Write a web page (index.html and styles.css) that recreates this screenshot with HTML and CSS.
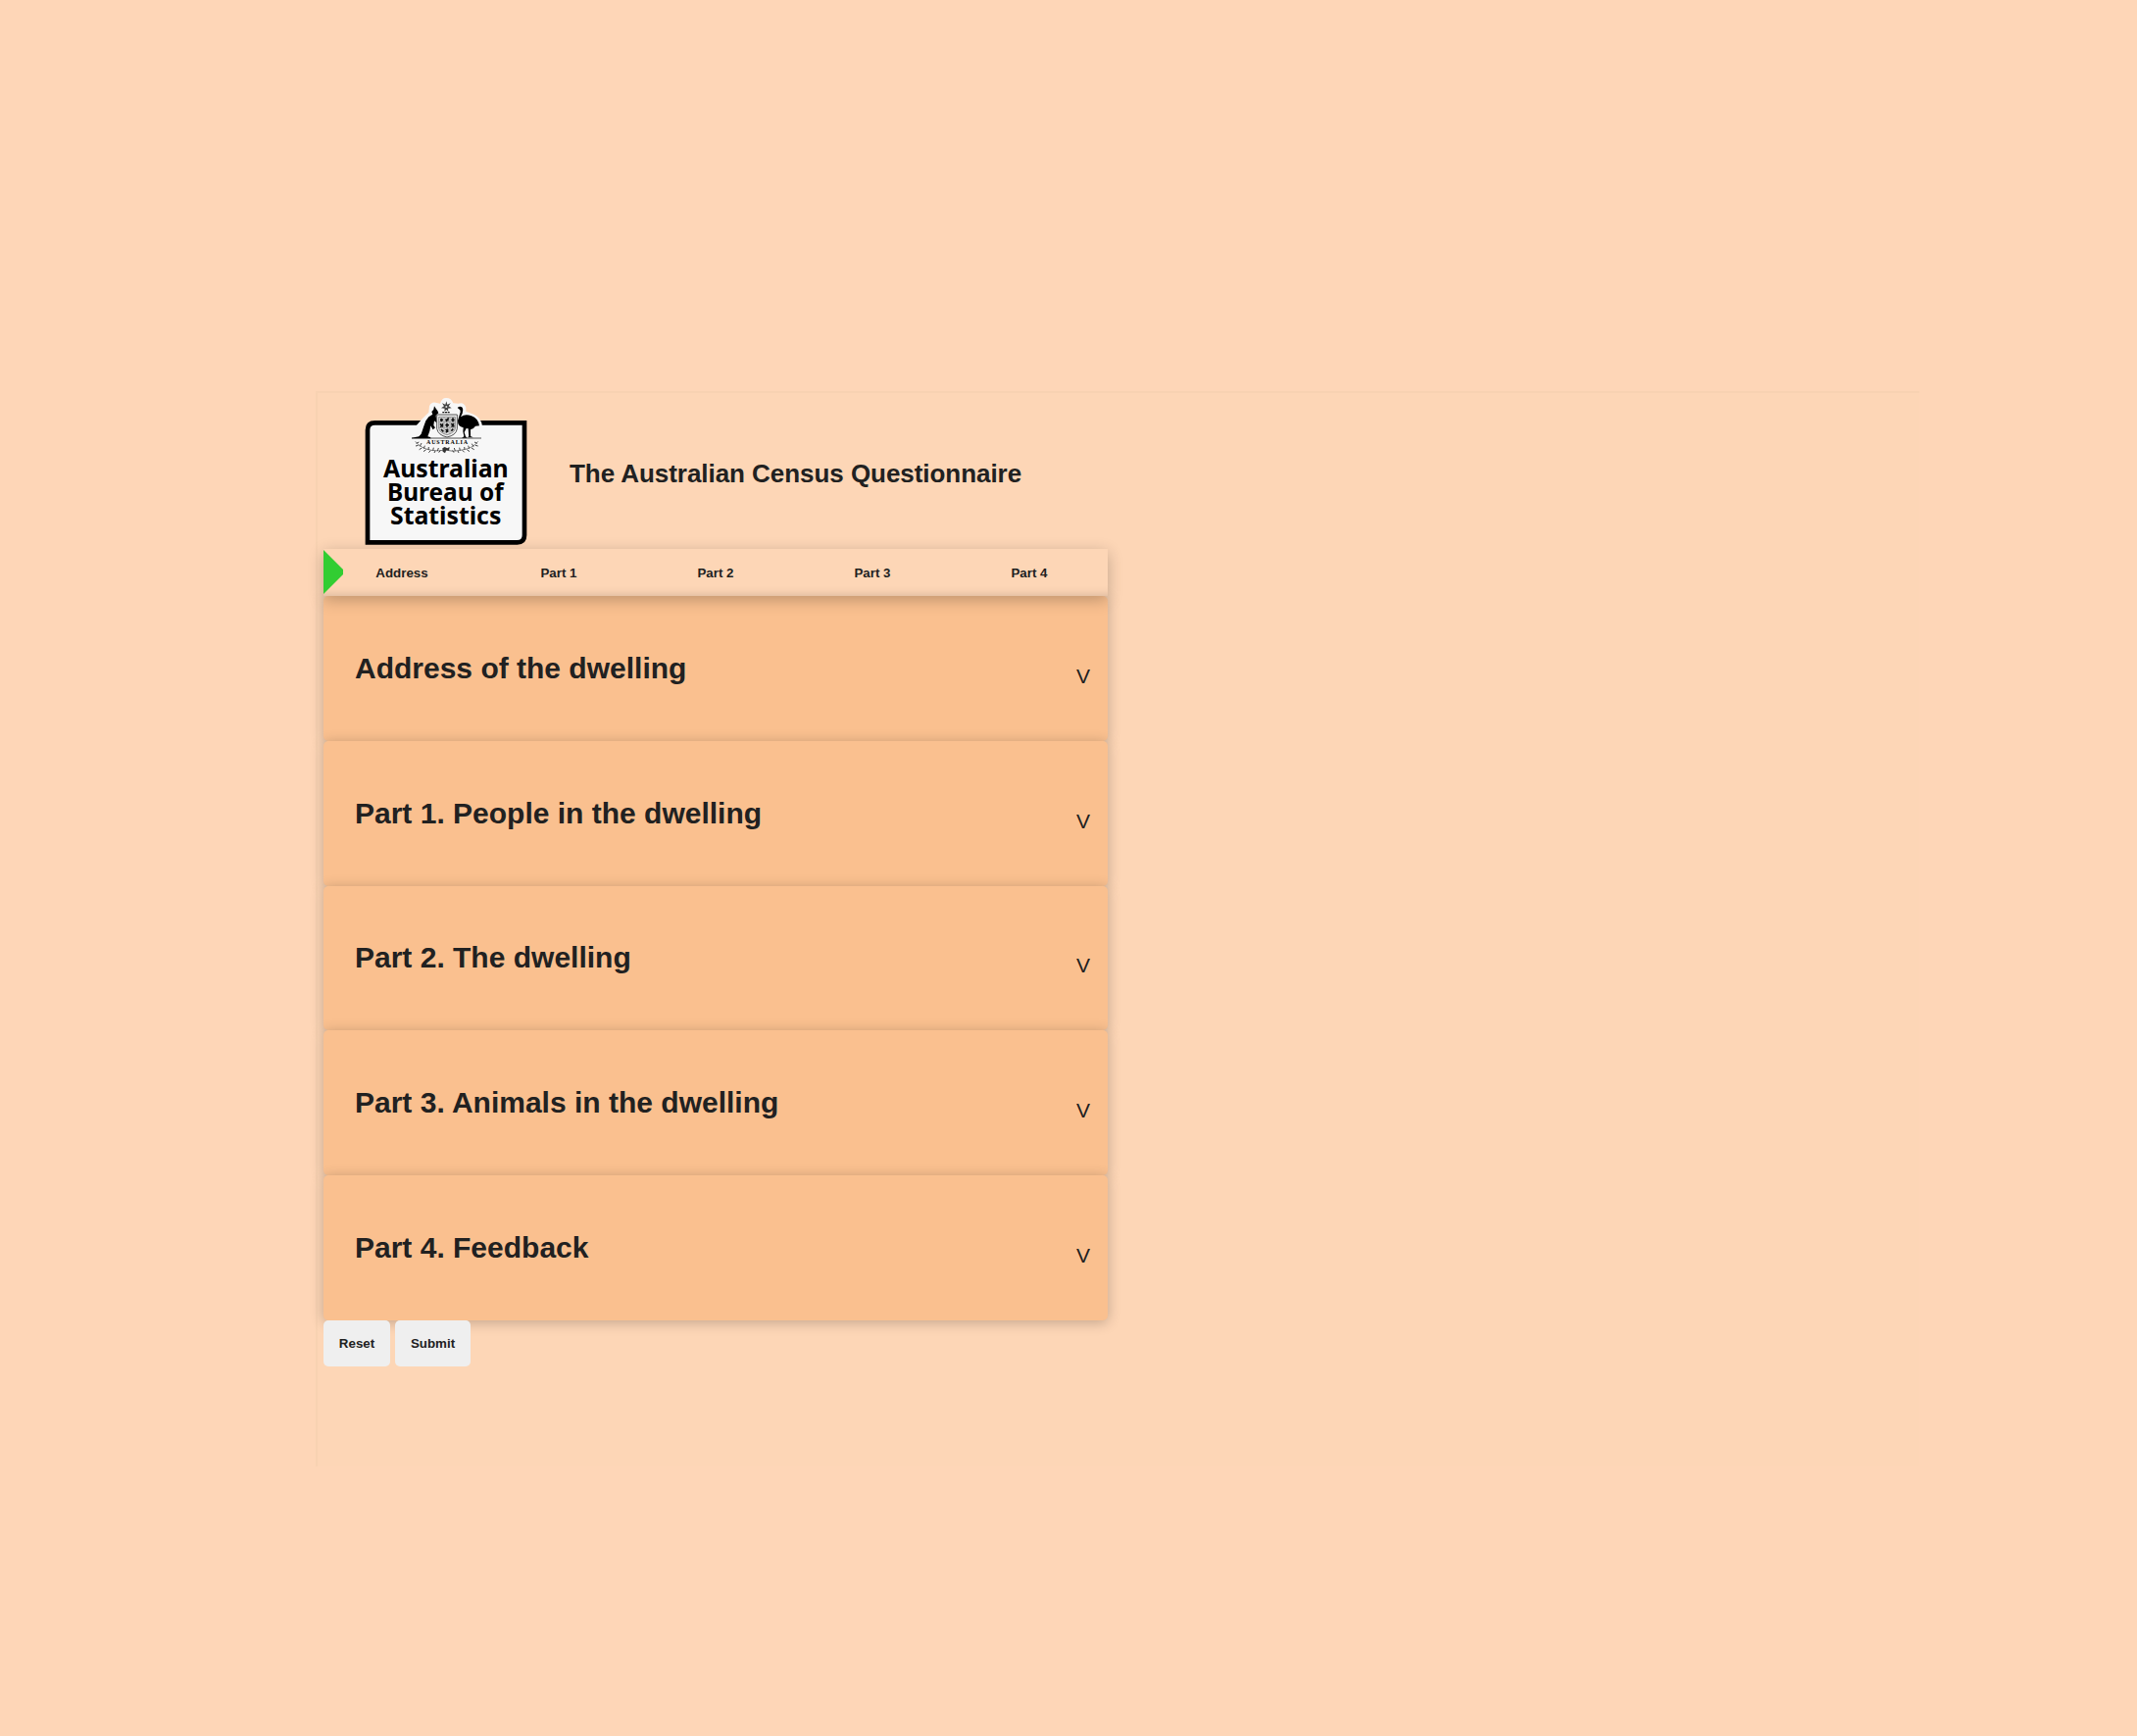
FILE: index.html
```html
<!DOCTYPE html>
<html lang="en">
<head>
<meta charset="utf-8">
<title>The Australian Census Questionnaire</title>
<link rel="stylesheet" href="styles.css">
</head>
<body>
<main class="frame">
  <header class="header">
    <svg class="logo" viewBox="180 45 510 456" role="img" aria-label="Australian Bureau of Statistics">
      <path d="M195 489V146Q195 124 217 124H675V468Q675 490 653 490H195Z" fill="#f7f7f7" stroke="#000" stroke-width="14"/>
      <path d="M342 135L362 112L382 92L384 73Q391 58 406 63L417 65Q422 47 436 48Q451 48 457 64L472 65Q490 59 496 77V89L520 98Q542 107 546 134V180H335Z" fill="#f7f7f7"/>
      <path d="M399 73L397 83L391 90L394 98L382 106L373 118L366 137L359 158L352 166L330 170V172H389L387 168L379 166L385 149L388 133L395 145L402 139L397 132L399 118L410 127L405 111L404 101L412 94L409 87L405 82Z"/>
      <path d="M470 78Q477 71 485 77Q489 83 485 95L480 106Q493 96 513 103Q533 110 537 133L525 134Q519 143 510 145V165L518 169H500L505 166L503 142L497 141L491 153L495 166L500 170H483L490 166L487 151L488 139Q470 135 471 117L479 91L478 85Z"/>
      <path d="M330 171H543" stroke="#000" stroke-width="2"/>
      <path d="M436 58L439 68L449 64L443 73L452 79L441 80L442 89L436 84L430 89L431 80L420 79L429 73L423 64L433 68Z" fill="#444"/>
      <circle cx="436" cy="75" r="3" fill="#ddd"/>
      <path d="M424 92H448" stroke="#111" stroke-width="4" stroke-dasharray="6 2"/>
      <path d="M407 99H469V142Q466 162 438 168Q411 162 407 142Z" fill="#f2f2f2" stroke="#555" stroke-width="3"/>
      <path d="M413 106H463V141Q461 155 438 161Q415 155 413 141Z" fill="#ddd" stroke="#666" stroke-width="2"/>
      <path d="M429 106V158M447 106V158M413 122H463M413 139H463" stroke="#888" stroke-width="2"/>
      <path d="M417 115H426M421 110V120M433 113L443 117M443 109L435 120M451 115H461M456 109V121M417 127L426 136M426 127L418 137M433 131H444M438 125V137M451 126L460 136M459 126L452 137M420 144L427 151M434 144L442 152M441 143L435 154M451 149L457 143" stroke="#111" stroke-width="5"/>
      <path d="M341 181Q357 202 390 208Q414 212 432 207Q457 215 484 207Q518 202 533 181" fill="none" stroke="#444" stroke-width="2"/>
      <path d="M344 187L352 183M350 193L342 195M355 196L360 186M361 201L353 206M367 203L370 194M374 206L366 212M381 207L382 198M388 209L382 215M395 209L397 200M402 210L399 216M409 210L412 201M418 208L413 215M530 187L522 183M525 193L533 195M519 197L514 188M513 201L521 206M506 203L503 194M499 206L507 212M492 206L491 198M485 208L491 214M478 209L476 200M471 210L474 216M463 210L460 201M455 208L459 215" stroke="#444" stroke-width="3"/>
      <path d="M424 202L431 198L439 202L446 198L444 209L436 208L432 217L425 212Z" fill="#333"/>
      <text class="arms-name" x="375" y="190" textLength="126">AUSTRALIA</text>
      <text class="logo-text" x="243" y="291" textLength="383" lengthAdjust="spacingAndGlyphs">Australian</text>
      <text class="logo-text" x="255" y="364" textLength="356" lengthAdjust="spacingAndGlyphs">Bureau of</text>
      <text class="logo-text" x="264" y="436" textLength="340" lengthAdjust="spacingAndGlyphs">Statistics</text>
    </svg>
    <h1 class="title">The Australian Census Questionnaire</h1>
  </header>
  <nav class="steps">
    <span class="step current">Address</span>
    <span class="step">Part 1</span>
    <span class="step">Part 2</span>
    <span class="step">Part 3</span>
    <span class="step">Part 4</span>
  </nav>
  <div class="panels">
    <section class="panel"><h2>Address of the dwelling</h2><span class="toggle">V</span></section>
    <section class="panel"><h2>Part 1. People in the dwelling</h2><span class="toggle">V</span></section>
    <section class="panel"><h2>Part 2. The dwelling</h2><span class="toggle">V</span></section>
    <section class="panel"><h2>Part 3. Animals in the dwelling</h2><span class="toggle">V</span></section>
    <section class="panel"><h2>Part 4. Feedback</h2><span class="toggle">V</span></section>
  </div>
  <div class="actions">
    <button class="reset" type="reset">Reset</button>
    <button class="submit" type="submit">Submit</button>
  </div>
</main>
</body>
</html>
```
FILE: styles.css
```css
* { box-sizing: border-box; }
body {
  margin: 0;
  padding: 399px 222px 275px 322px;
  background: #fed6b7;
  color: #212121;
  font-family: "Liberation Sans", Arial, sans-serif;
}
.frame {
  width: 1636px;
  height: 1097px;
  padding-left: 6px;
  border-left: 2px solid #f8d2b2;
  border-top: 2px solid #f8d2b2;
  background: #fdd6b6;
}
.header { display: flex; align-items: center; height: 159px; padding-left: 40px; }
.logo { width: 170px; height: 152px; flex: none; }
.logo-text { font: bold 76px "Noto Sans", sans-serif; }
.arms-name { font: bold 18px "Liberation Serif", serif; }
.title { margin: 4px 0 0 41px; font-size: 26px; line-height: 32px; letter-spacing: -0.05px; white-space: nowrap; }
.steps {
  position: relative;
  z-index: 1;
  display: grid;
  grid-template-columns: repeat(5, 1fr);
  width: 800px;
  height: 48px;
  background: #fdd6b6;
  box-shadow: 0 4px 15px rgba(0,0,0,.24), inset 0 -10px 10px -9px rgba(0,0,0,.16);
}
.step { display: flex; align-items: center; justify-content: center; font-size: 13.33px; font-weight: bold; }
.current { position: relative; }
.current::before {
  content: "";
  position: absolute;
  left: 0;
  top: 1px;
  width: 20px;
  height: 45px;
  background: #32cd32;
  clip-path: polygon(0 0, 100% 20px, 100% 25px, 0 100%);
}
.panels { width: 800px; }
.panel {
  display: flex;
  align-items: center;
  justify-content: space-between;
  height: 147.8px;
  padding: 0 18px 0 32px;
  border-radius: 5px;
  background: #fac08f;
  box-shadow: 0 2px 14px rgba(0,0,0,.24);
}
.panel h2 { margin: 0; font-size: 30px; line-height: 36px; }
.toggle { padding-top: 16px; font-size: 21px; line-height: 24px; }
.actions { position: relative; display: flex; gap: 5px; }
.actions button {
  height: 47px;
  padding: 0;
  border: 0;
  border-radius: 5px;
  background: #efefef;
  color: #212121;
  font: bold 13.33px "Liberation Sans", Arial, sans-serif;
}
.reset { width: 68px; }
.submit { width: 77px; }
```
